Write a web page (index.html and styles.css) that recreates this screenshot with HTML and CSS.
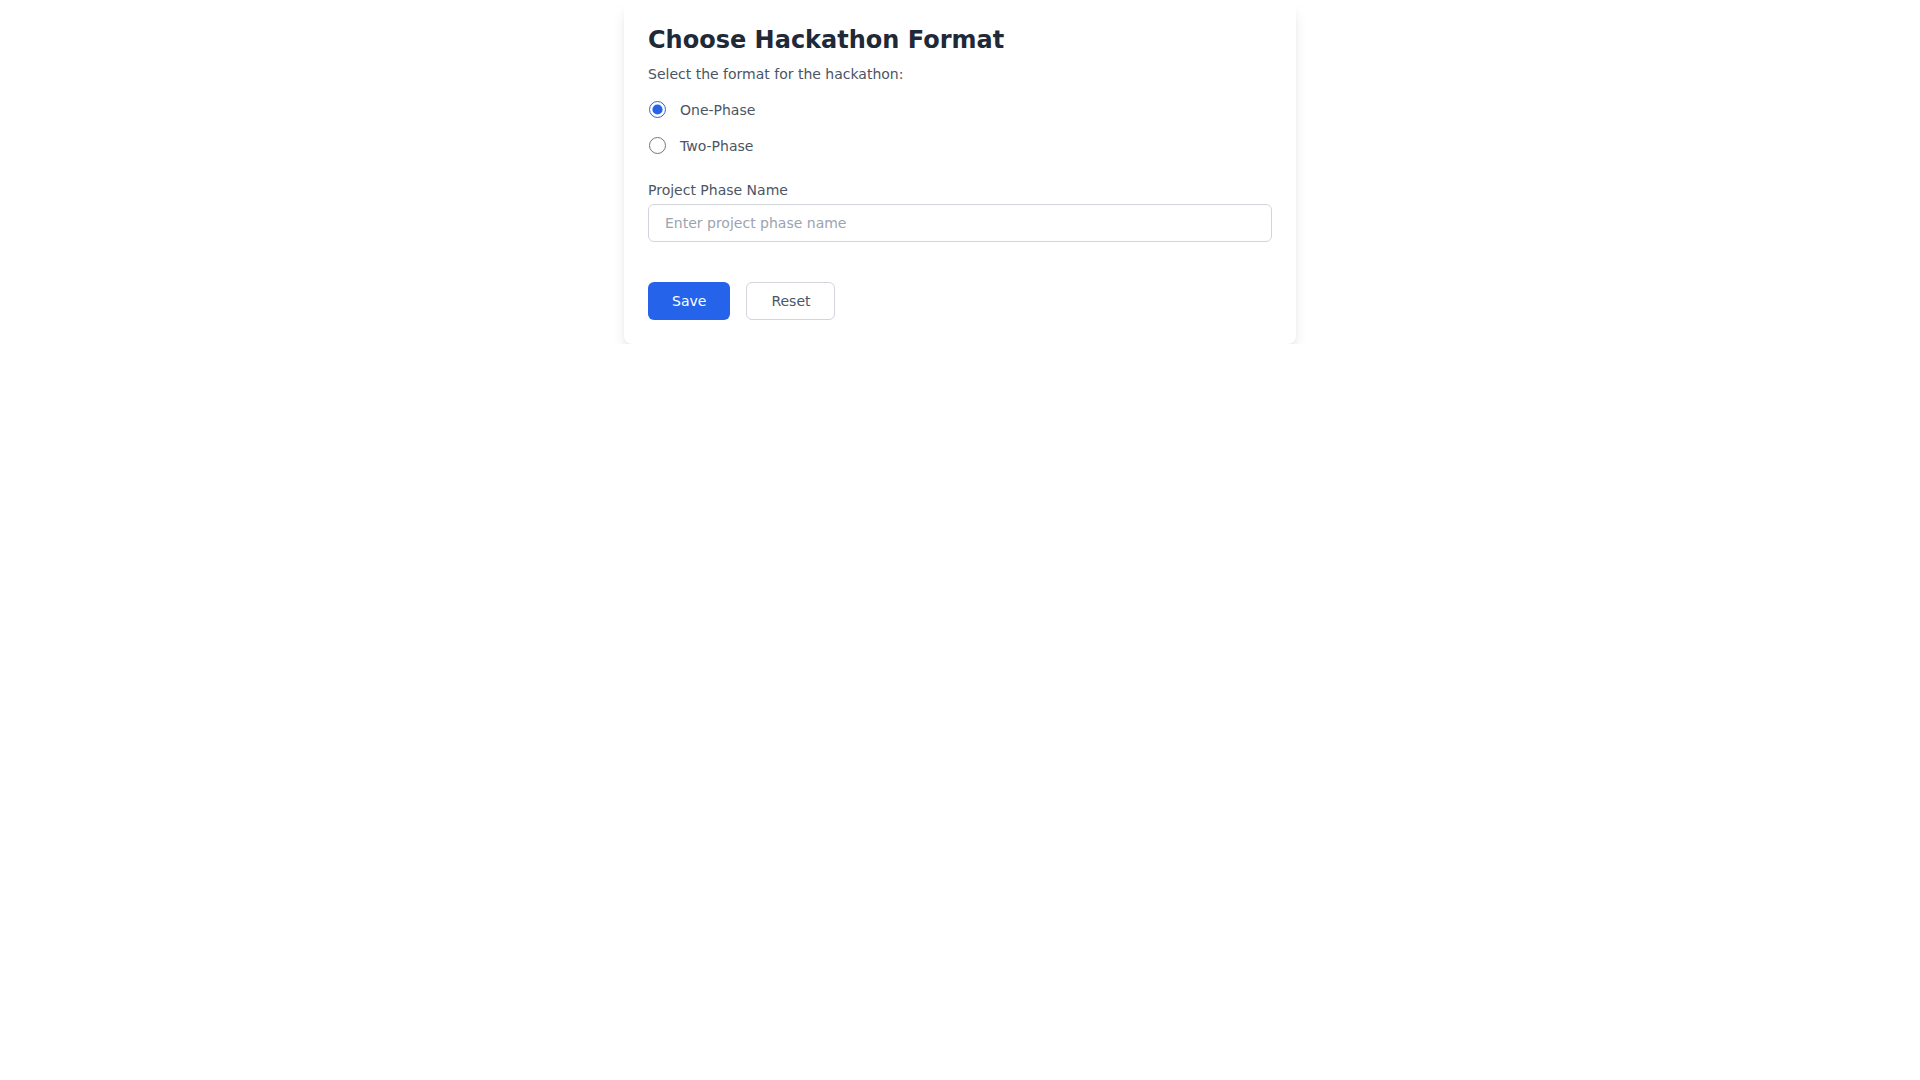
FILE: index.html
```html
<!DOCTYPE html>
<html lang="en">
<head>
<meta charset="utf-8">
<title>Choose Hackathon Format</title>
<link rel="stylesheet" href="styles.css">
</head>
<body>
<div class="page">
  <form class="card">
    <h1 class="title">Choose Hackathon Format</h1>
    <p class="subtitle">Select the format for the hackathon:</p>
    <div class="radio-group">
      <label class="radio-row">
        <input type="radio" name="format" class="radio" checked>
        <span class="radio-label">One-Phase</span>
      </label>
      <label class="radio-row">
        <input type="radio" name="format" class="radio">
        <span class="radio-label">Two-Phase</span>
      </label>
    </div>
    <div class="field">
      <label class="field-label" for="phase">Project Phase Name</label>
      <input id="phase" class="text-input" type="text" placeholder="Enter project phase name">
    </div>
    <div class="actions">
      <button type="button" class="btn btn-primary">Save</button>
      <button type="reset" class="btn btn-secondary">Reset</button>
    </div>
  </form>
</div>
</body>
</html>
```

FILE: styles.css
```css
* { box-sizing: border-box; }

html, body {
  margin: 0;
  padding: 0;
  background: #ffffff;
  font-family: "DejaVu Sans", sans-serif;
}

.page {
  display: flex;
  justify-content: center;
}

.card {
  width: 672px;
  background: #ffffff;
  border-radius: 8px;
  padding: 24px;
  box-shadow: 0 10px 15px -3px rgba(0,0,0,0.12), 0 4px 6px -4px rgba(0,0,0,0.12);
}

.title {
  margin: 0 0 8px 0;
  font-size: 24px;
  line-height: 32px;
  font-weight: 700;
  color: #1f2937;
}

.subtitle {
  margin: 0 0 16px 0;
  font-size: 14px;
  line-height: 20px;
  color: #4b5563;
}

.radio-group {
  display: flex;
  flex-direction: column;
  gap: 16px;
  margin-bottom: 24px;
}

.radio-row {
  display: flex;
  align-items: center;
  height: 20px;
}

.radio {
  width: 17px;
  height: 17px;
  margin: -1px 0 0 1px;
  accent-color: #2563eb;
}

.radio-label {
  margin-left: 14px;
  font-size: 14px;
  line-height: 20px;
  color: #4b5563;
}

.field {
  display: flex;
  flex-direction: column;
  margin-bottom: 40px;
}

.field-label {
  font-size: 14px;
  line-height: 20px;
  color: #4b5563;
  margin-bottom: 4px;
}

.text-input {
  width: 100%;
  height: 38px;
  padding: 8px 16px;
  border: 1px solid #d1d5db;
  border-radius: 6px;
  font-family: "DejaVu Sans", sans-serif;
  font-size: 14px;
  line-height: 20px;
  color: #111827;
  background: #fff;
  outline: none;
}

.text-input::placeholder {
  color: #9ca3af;
}

.actions {
  display: flex;
  gap: 16px;
}

.btn {
  height: 38px;
  padding: 0 24px;
  border-radius: 6px;
  font-family: "DejaVu Sans", sans-serif;
  font-size: 14px;
  line-height: 20px;
  cursor: pointer;
}

.btn-primary {
  background: #2563eb;
  color: #ffffff;
  border: none;
}

.btn-secondary {
  background: #ffffff;
  color: #4b5563;
  border: 1px solid #d1d5db;
}
```
